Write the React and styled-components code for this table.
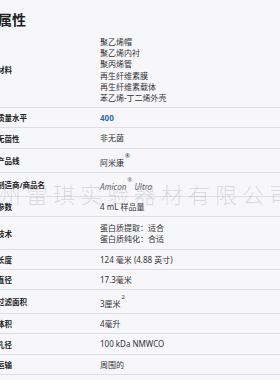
import styled, { createGlobalStyle } from "styled-components";

const GlobalStyle = createGlobalStyle`
  html, body {
    margin: 0;
    padding: 0;
    background: #f7f7fa;
  }
  body {
    font-family: "Noto Sans", "Noto Sans CJK SC", sans-serif;
    color: #333;
    overflow: hidden;
  }
`;

const Page = styled.div`
  position: relative;
  width: 280px;
  height: 380px;
  overflow: hidden;
  padding-top: 11px;
  box-sizing: border-box;
`;

const Heading = styled.h2`
  margin: 0 0 3px -2px;
  font-size: 14px;
  line-height: 18px;
  font-weight: 700;
  color: #222;
`;

const Table = styled.div`
  display: flex;
  flex-direction: column;
`;

const Row = styled.div`
  display: grid;
  grid-template-columns: 103px 1fr;
  align-items: center;
  margin-left: -3px;
  border-bottom: 1px solid #dedee6;
  padding: ${({ $pad }) => $pad || "4px 0"};
`;

const Label = styled.div`
  font-size: 7.5px;
  font-weight: 700;
  color: #222;
  white-space: nowrap;
`;

const Value = styled.div`
  font-size: 8px;
  line-height: 11.2px;
  color: ${({ $accent }) => ($accent ? "#2d6cb0" : "#333")};
  font-weight: ${({ $accent }) => ($accent ? 700 : 400)};
  font-style: ${({ $italic }) => ($italic ? "italic" : "normal")};
  white-space: nowrap;
`;

const Brand = styled(Value)`
  color: #666;
`;

const Line = styled.div``;

const Sup = styled.sup`
  font-size: 6px;
  line-height: 1;
  vertical-align: ${({ $high }) => ($high ? "8px" : "4px")};
  margin-left: 1px;
`;

const Watermark = styled.div`
  position: absolute;
  left: -28px;
  top: 180px;
  font-family: "Noto Sans CJK SC", sans-serif;
  font-size: 22px;
  font-weight: 300;
  letter-spacing: 5px;
  line-height: 26px;
  color: rgba(130, 130, 140, 0.26);
  white-space: nowrap;
  pointer-events: none;
`;

const rows = [
  {
    label: "材料",
    lines: [
      "聚乙烯帽",
      "聚乙烯内衬",
      "聚丙烯管",
      "再生纤维素膜",
      "再生纤维素载体",
      "苯乙烯-丁二烯外壳",
    ],
  },
  { label: "质量水平", lines: ["400"], accent: true },
  { label: "无菌性", lines: ["非无菌"] },
  { label: "产品线", lines: ["阿米康"], sup: "®", high: true },
  { label: "制造商/商品名", brand: true },
  { label: "参数", lines: ["4 mL 样品量"] },
  { label: "技术", lines: ["蛋白质提取：适合", "蛋白质纯化：合适"], pad: "5px 0 4px" },
  { label: "长度", lines: ["124 毫米 (4.88 英寸)"] },
  { label: "直径", lines: ["17.3毫米"] },
  { label: "过滤面积", lines: ["3厘米"], sup: "2", high: true },
  { label: "体积", lines: ["4毫升"] },
  { label: "孔径", lines: ["100 kDa NMWCO"] },
  { label: "运输", lines: ["周围的"] },
];

export default function App() {
  return (
    <>
      <GlobalStyle />
      <Page>
        <Heading>属性</Heading>
        <Table>
          {rows.map((row) => (
            <Row key={row.label} $pad={row.pad}>
              <Label>{row.label}</Label>
              {row.brand ? (
                <Brand $italic>
                  Amicon<Sup $high>®</Sup> Ultra
                </Brand>
              ) : (
                <Value $accent={row.accent}>
                  {row.lines.map((text, i) => (
                    <Line key={i}>
                      {text}
                      {row.sup && <Sup $high={row.high}>{row.sup}</Sup>}
                    </Line>
                  ))}
                </Value>
              )}
            </Row>
          ))}
        </Table>
        <Watermark>广州雷琪实验器材有限公司</Watermark>
      </Page>
    </>
  );
}
